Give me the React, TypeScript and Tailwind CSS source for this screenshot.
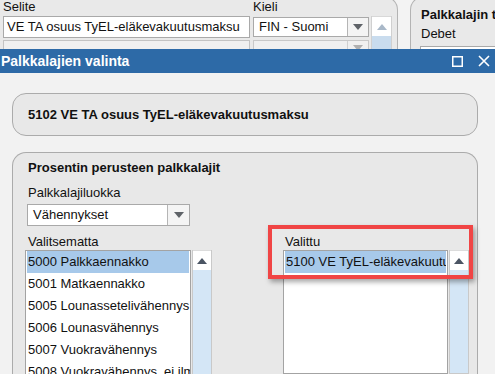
import React from "react";

function Up({ color = "#4b5563" }: { color?: string }) {
  return (
    <svg width="10" height="6" viewBox="0 0 10 6">
      <polygon points="0,6 10,6 5,0" fill={color} />
    </svg>
  );
}

function Down({ color = "#5f6368" }: { color?: string }) {
  return (
    <svg width="10" height="6" viewBox="0 0 10 6">
      <polygon points="0,0 10,0 5,6" fill={color} />
    </svg>
  );
}

function ScrollBar() {
  return (
    <div className="w-[20px] flex flex-col border border-[#c9c9c9] border-t-0">
      <div className="h-[20px] bg-white border-t border-[#dcdcdc] flex items-center justify-center">
        <Up />
      </div>
      <div className="flex-1 bg-[#d4e6f6]" />
    </div>
  );
}

const unselected = [
  "5001 Matkaennakko",
  "5005 Lounasseteliv\u00e4hennys",
  "5006 Lounasv\u00e4hennys",
  "5007 Vuokrav\u00e4hennys",
  "5008 Vuokrav\u00e4hennys, ei ilmoiteta",
];

export default function App() {
  return (
    <div
      className="relative w-[495px] h-[374px] overflow-hidden flex flex-col bg-[#f2f2f2] text-[13px] text-[#111]"
      style={{ fontFamily: '"Liberation Sans", Arial, sans-serif' }}
    >
      {/* underlying window, mostly hidden by the dialog */}
      <div className="h-[49px] shrink-0 flex bg-[#f3f3f3] overflow-hidden">
        <div className="-mt-[4px] h-[60px] w-[398px] shrink-0 flex bg-[#e9e9e9] border-r border-t border-[#b3b3b3] rounded-tr-[14px] pl-[3px] pt-[2px]">
          <div className="w-[247px] flex flex-col">
            <div className="leading-[15px]">Selite</div>
            <div className="mt-[2px] h-[22px] bg-white border border-[#a9a9a9] flex items-center pl-[3px] whitespace-nowrap">
              VE TA osuus TyEL-el&auml;kevakuutusmaksu
            </div>
            <div className="mt-[2px] h-[20px] bg-[#f0f0f0] border border-[#c3c3c3]" />
          </div>
          <div className="ml-[3px] w-[116px] flex flex-col">
            <div className="leading-[15px]">Kieli</div>
            <div className="mt-[3px] h-[20px] bg-white border border-[#a9a9a9] flex">
              <div className="flex-1 flex items-center pl-[5px]">FIN - Suomi</div>
              <div className="w-[21px] border-l border-[#b5b5b5] bg-[#f4f4f4] flex items-center justify-center">
                <Down />
              </div>
            </div>
            <div className="mt-[3px] h-[20px] bg-[#f0f0f0] border border-[#c8c8c8] flex justify-end">
              <div className="w-[21px] border-l border-[#d0d0d0] flex items-center justify-center">
                <Down color="#b0b0b0" />
              </div>
            </div>
          </div>
          <div className="ml-[2px] mt-[17px] w-[21px] flex flex-col border-x border-[#d0d0d0]">
            <div className="h-[20px] bg-white border-t border-[#d8d8d8] flex items-center justify-center">
              <Up color="#a9b8c8" />
            </div>
            <div className="flex-1 bg-[#c9dcee]" />
          </div>
        </div>
        <div className="w-[12px] shrink-0" />
        <div className="-mt-[4px] h-[60px] flex-1 bg-[#e9e9e9] border-l border-t border-[#b3b3b3] rounded-tl-[14px] pl-[10px] pt-[10px] whitespace-nowrap">
          <div className="font-bold leading-[15px]">Palkkalajin tiedot</div>
          <div className="mt-[4px] leading-[15px]">Debet</div>
          <div className="mt-[5px] -ml-[1px] h-[22px] bg-white border border-[#a9a9a9]" />
        </div>
      </div>

      {/* dialog title bar */}
      <div className="h-[24px] shrink-0 bg-[#2d6aa7] flex items-center justify-between text-white">
        <div className="pl-[1px] font-bold text-[14px] leading-[16px]">Palkkalajien valinta</div>
        <div className="flex items-center pr-[5px]">
          <svg width="11" height="11" viewBox="0 0 11 11">
            <rect x="0.75" y="0.75" width="9.5" height="9.5" fill="none" stroke="white" strokeWidth="1.5" />
          </svg>
          <svg className="ml-[15px]" width="12" height="12" viewBox="0 0 12 12">
            <path d="M1 1 L11 11 M11 1 L1 11" stroke="white" strokeWidth="1.6" />
          </svg>
        </div>
      </div>

      {/* dialog body */}
      <div className="flex-1 flex flex-col px-[12px] pt-[20px] pr-[17px] min-h-0">
        <div className="h-[43px] shrink-0 bg-[#e8e8e8] border border-[#ababab] rounded-[14px] flex items-center pl-[15px] font-bold whitespace-nowrap">
          5102 VE TA osuus TyEL-el&auml;kevakuutusmaksu
        </div>

        <div className="mt-[16px] flex-1 bg-[#e8e8e8] border border-b-0 border-[#ababab] rounded-t-[14px] pl-[15px] pt-[7px] flex flex-col min-h-0">
          <div className="font-bold leading-[15px]">Prosentin perusteen palkkalajit</div>
          <div className="mt-[10px] leading-[15px]">Palkkalajiluokka</div>
          <div className="mt-[4px] -ml-[1px] w-[163px] h-[22px] bg-white border border-[#a9a9a9] flex">
            <div className="flex-1 flex items-center pl-[5px]">V&auml;hennykset</div>
            <div className="w-[22px] border-l border-[#b5b5b5] bg-[#f4f4f4] flex items-center justify-center">
              <Down />
            </div>
          </div>

          <div className="mt-[8px] flex flex-1 min-h-0">
            {/* left list */}
            <div className="-ml-[3px] flex flex-col">
              <div className="pl-[3px] leading-[15px]">Valitsematta</div>
              <div className="mt-[1px] flex flex-1">
                <div className="w-[166px] bg-white border border-[#a3a3a3] overflow-hidden">
                  <div className="mx-[1px] h-[22px] leading-[22px] pl-[1px] bg-[#a7c9ea] whitespace-nowrap">
                    5000 Palkkaennakko
                  </div>
                  {unselected.map((t) => (
                    <div key={t} className="h-[22px] leading-[22px] pl-[2px] whitespace-nowrap">
                      {t}
                    </div>
                  ))}
                </div>
                <div className="ml-[1px] flex">
                  <ScrollBar />
                </div>
              </div>
            </div>

            {/* right list */}
            <div className="ml-[71px] flex flex-col">
              <div className="pl-[2px] leading-[15px]">Valittu</div>
              <div className="mt-[1px] flex flex-1">
                <div className="w-[165px] bg-white border border-[#a3a3a3] overflow-hidden">
                  <div className="mx-[1px] h-[22px] leading-[22px] pl-[1px] bg-[#a7c9ea] whitespace-nowrap overflow-hidden">
                    5100 VE TyEL-el&auml;kevakuutusmaksu
                  </div>
                </div>
                <div className="ml-[1px] flex">
                  <ScrollBar />
                </div>
              </div>
            </div>
          </div>
        </div>
      </div>

      {/* red highlight annotation */}
      <div className="absolute left-[268px] top-[225px] w-[205px] h-[54px] border-[4px] border-[#f04545] shadow-[2px_3px_5px_rgba(0,0,0,0.35)]" />
    </div>
  );
}
